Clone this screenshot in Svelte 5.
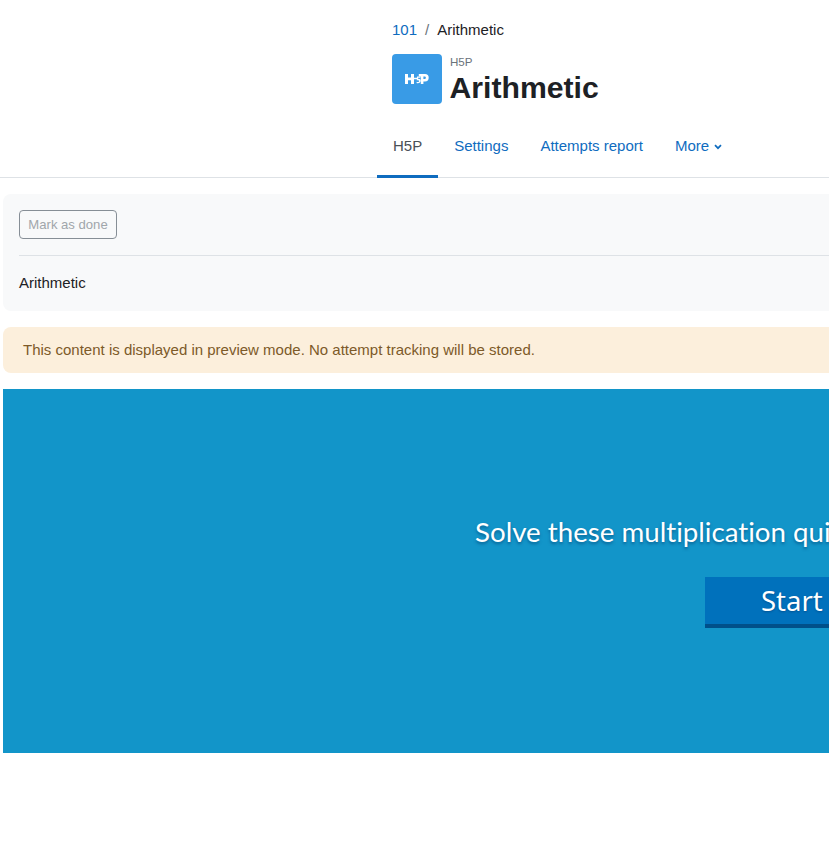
<script>
  const tabs = [
    { label: 'H5P', active: true },
    { label: 'Settings' },
    { label: 'Attempts report' }
  ];
</script>

<div class="page">
  <header class="head">
    <nav class="crumbs">
      <a href="#a">101</a>
      <span class="sep">/</span>
      <span>Arithmetic</span>
    </nav>
    <div class="title-row">
      <div class="logo">
        <svg width="24" height="10" viewBox="0 0 24 10" aria-hidden="true">
          <path fill="#fff" d="M0 0h3v3.500h3V0h3v10H6V6.200H3V10H0zM9 3.700h3.400v1.500H9z"/>
          <path fill="#fff" d="M12 2.400h3.400v1.300h-2.300l-.2 1.300c1.500-.5 2.800.2 2.800 1.800 0 1.900-2 3-4.200 2.200l.3-1.200c1.200.5 2.300.2 2.300-.8 0-.7-.9-1-2.300-.5z"/>
          <path fill="#fff" fill-rule="evenodd" d="M13.800 0H20a3.700 3.700 0 0 1 0 7.400h-1.600V10h-2.600V2.600h-2zM18.400 2.400v2.600h1.200a1.300 1.300 0 0 0 0-2.600z"/>
        </svg>
      </div>
      <div class="titles">
        <div class="kind">H5P</div>
        <h1>Arithmetic</h1>
      </div>
    </div>
    <ul class="tabs">
      {#each tabs as t}
        <li class:active={t.active}><a href="#t">{t.label}</a></li>
      {/each}
      <li>
        <a href="#m" class="more">More
          <svg width="8" height="6" viewBox="0 0 8 6" aria-hidden="true"><path d="M1 1.200 4 4.200 7 1.200" fill="none" stroke="currentColor" stroke-width="1.700"/></svg>
        </a>
      </li>
    </ul>
  </header>

  <main class="body">
    <section class="card">
      <button class="done">Mark as done</button>
      <hr />
      <p>Arithmetic</p>
    </section>
    <div class="notice">This content is displayed in preview mode. No attempt tracking will be stored.</div>
    <section class="stage">
      <h2>Solve these multiplication quizzes</h2>
      <button class="start">Start Quiz</button>
    </section>
  </main>
</div>

<style>
  :global(body) {
    margin: 0;
    background: #fff;
    overflow: hidden;
  }
  .page {
    width: 829px;
    height: 852px;
    overflow: hidden;
    font-family: "Liberation Sans", Arial, sans-serif;
    font-size: 15px;
    color: #1d2125;
  }
  a {
    color: #0f6cbf;
    text-decoration: none;
  }
  .head {
    padding-top: 21px;
    border-bottom: 1px solid #dee2e6;
  }
  .crumbs {
    display: flex;
    gap: 8px;
    padding-left: 392px;
    line-height: 18px;
  }
  .sep {
    color: #6a737b;
  }
  .title-row {
    display: flex;
    gap: 8px;
    margin-top: 15px;
    padding-left: 392px;
  }
  .logo {
    width: 50px;
    height: 50px;
    border-radius: 4px;
    background: #399be6;
    display: flex;
    align-items: center;
    justify-content: center;
  }
  .kind {
    font-size: 11.600px;
    line-height: 13px;
    margin-top: 1px;
    color: #6a737b;
  }
  h1 {
    margin: 2px 0 0 -0.500px;
    font-size: 30.200px;
    line-height: 36px;
    font-weight: 700;
  }
  .tabs {
    display: flex;
    list-style: none;
    margin: 14px 0 0;
    padding: 0 0 0 377px;
  }
  .tabs li {
    height: 58px;
    box-sizing: border-box;
    padding: 0 16px;
    line-height: 51px;
    border-bottom: 3px solid transparent;
    margin-bottom: -1px;
  }
  .tabs li.active {
    border-bottom-color: #0f6cbf;
  }
  .tabs li.active a {
    color: #495057;
  }
  .more svg {
    margin-left: 1px;
    vertical-align: 1px;
  }
  .body {
    padding: 16px 0 0 3px;
    width: 1200px;
  }
  .card {
    background: #f8f9fa;
    border-radius: 8px;
    padding: 16px;
    height: 117px;
    box-sizing: border-box;
  }
  .done {
    display: block;
    height: 29px;
    width: 98px;
    padding: 0;
    border: 1px solid #868e96;
    border-radius: 4px;
    background: transparent;
    color: #a0a6ab;
    font: 13.100px "Liberation Sans", Arial, sans-serif;
  }
  hr {
    border: 0;
    border-top: 1px solid #dee2e6;
    margin: 16px 0 0;
  }
  .card p {
    margin: 18px 0 0;
    line-height: 18px;
  }
  .notice {
    margin-top: 16px;
    height: 46px;
    line-height: 46px;
    padding-left: 20px;
    border-radius: 8px;
    background: #fcefdc;
    color: #7d5a29;
    font-size: 15px;
  }
  .stage {
    margin-top: 16px;
    height: 364px;
    padding-left: 472px;
    background: #1295c9;
    color: #fff;
  }
  h2 {
    margin: 0;
    padding-top: 123px;
    font-family: Lato, sans-serif;
    font-weight: 400;
    font-size: 27.700px;
    line-height: 40px;
    white-space: nowrap;
    font-variant-ligatures: none;
    text-shadow: 0 2px 3px rgba(0, 60, 110, 0.55);
  }
  .start {
    display: block;
    margin: 25px 0 0 230px;
    height: 51px;
    padding: 0 56px;
    border: 0;
    border-bottom: 4px solid #00508a;
    background: #0071bc;
    color: #fff;
    font-family: "Noto Sans", sans-serif;
    font-size: 27.500px;
    white-space: nowrap;
    text-shadow: 0 1px 2px rgba(0, 40, 90, 0.4);
  }
</style>
